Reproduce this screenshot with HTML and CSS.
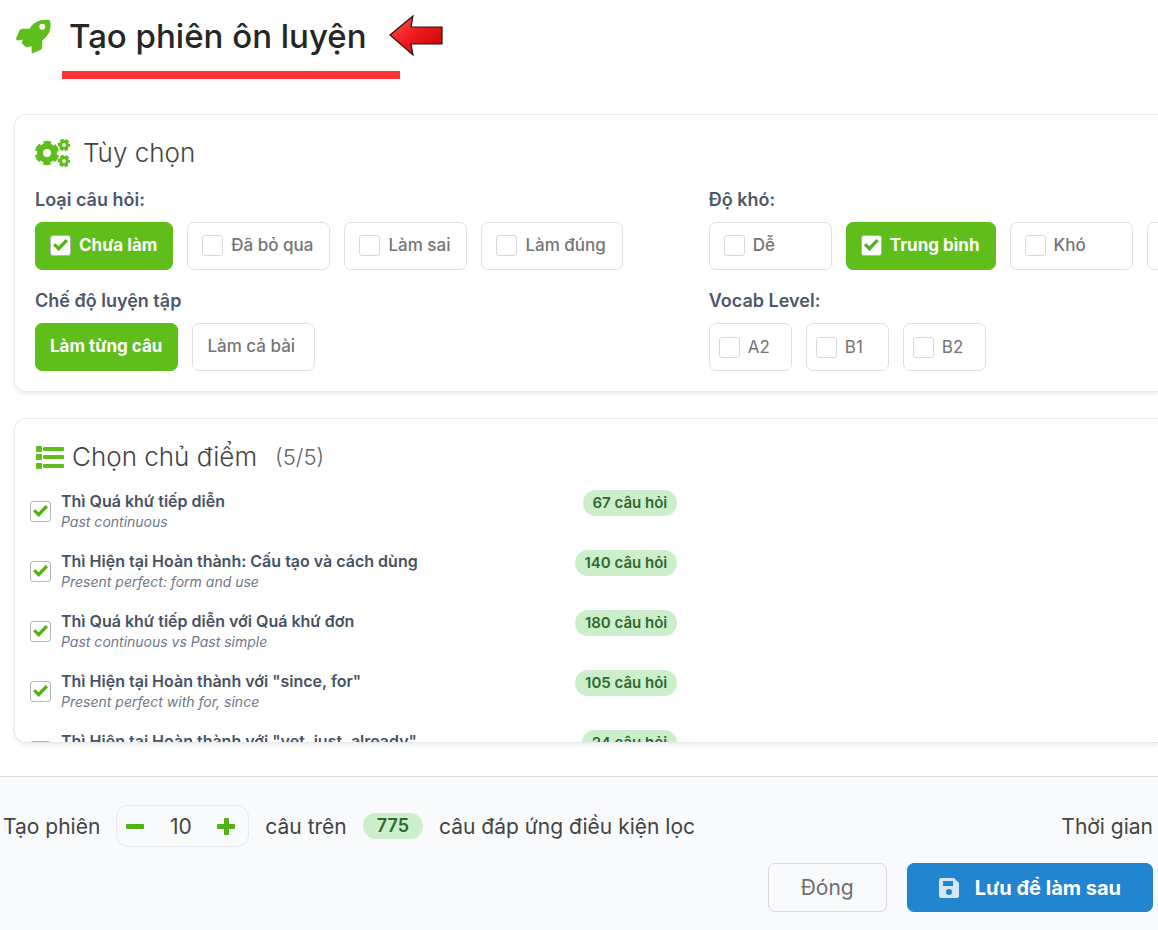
FILE: index.html
```html
<!DOCTYPE html>
<html lang="vi">
<head>
    <meta charset="UTF-8">
    <meta name="viewport" content="width=device-width, initial-scale=1.0">
    <title>Tạo phiên ôn luyện</title>
    <link rel="stylesheet" href="styles.css">
</head>
<body>
    <header class="page-header">
        <svg class="rocket" viewBox="0 0 36 36" aria-hidden="true">
            <path fill-rule="evenodd" d="M34 1C25 0 18 3 14 10H7Q4 10 3 13L0 20Q0 22 2 22L7 21L6 25L10 29L16 28V34Q16 36 18 35L25 32Q27 31 27 28V22C34 17 37 10 35 2Q35 1 34 1ZM27 5A3 3 0 1 1 27 11A3 3 0 1 1 27 5Z"/>
        </svg>
        <h1>Tạo phiên ôn luyện</h1>
        <svg class="arrow" viewBox="0 0 54 42" aria-hidden="true">
            <defs>
                <linearGradient id="red" x1="0" y1="0" x2="1" y2="1">
                    <stop offset="0" stop-color="#ff5a5a"/>
                    <stop offset="0.45" stop-color="#f01c1c"/>
                    <stop offset="1" stop-color="#c00000"/>
                </linearGradient>
            </defs>
            <path d="M1 20L24 1L22 12L53 12V29L22 29L24 40Z" fill="url(#red)" stroke="#2b1010" stroke-width="1.2"/>
        </svg>
    </header>

    <main>
        <!-- Options -->
        <section class="card">
            <h2>
                <svg class="gears" viewBox="0 0 36 28" aria-hidden="true">
                    <g fill="none" stroke="currentColor">
                        <circle cx="12" cy="14" r="7" stroke-width="6"/>
                        <circle cx="12" cy="14" r="10.2" stroke-width="4" stroke-dasharray="7 3.68" stroke-dashoffset="-1.84"/>
                        <circle cx="29" cy="6" r="3.4" stroke-width="3"/>
                        <circle cx="29" cy="6" r="5" stroke-width="2.4" stroke-dasharray="3.2 2.036" stroke-dashoffset="1.6"/>
                        <circle cx="29" cy="22" r="3.4" stroke-width="3"/>
                        <circle cx="29" cy="22" r="5" stroke-width="2.4" stroke-dasharray="3.2 2.036" stroke-dashoffset="1.6"/>
                    </g>
                </svg>
                Tùy chọn
            </h2>
            <div class="options">
                <fieldset>
                    <legend>Loại câu hỏi:</legend>
                    <div class="chips">
                        <label class="chip active"><input type="checkbox" checked>Chưa làm</label>
                        <label class="chip"><input type="checkbox">Đã bỏ qua</label>
                        <label class="chip"><input type="checkbox">Làm sai</label>
                        <label class="chip"><input type="checkbox">Làm đúng</label>
                    </div>
                </fieldset>
                <fieldset>
                    <legend>Độ khó:</legend>
                    <div class="chips">
                        <label class="chip"><input type="checkbox">Dễ</label>
                        <label class="chip active"><input type="checkbox" checked>Trung bình</label>
                        <label class="chip"><input type="checkbox">Khó</label>
                        <label class="chip"><input type="checkbox" aria-label="Khác"></label>
                    </div>
                </fieldset>
                <fieldset>
                    <legend>Chế độ luyện tập</legend>
                    <div class="chips">
                        <button type="button" class="chip active">Làm từng câu</button>
                        <button type="button" class="chip">Làm cả bài</button>
                    </div>
                </fieldset>
                <fieldset>
                    <legend>Vocab Level:</legend>
                    <div class="chips">
                        <label class="chip level"><input type="checkbox">A2</label>
                        <label class="chip level"><input type="checkbox">B1</label>
                        <label class="chip level"><input type="checkbox">B2</label>
                    </div>
                </fieldset>
            </div>
        </section>

        <!-- Topics -->
        <section class="card topics">
            <h2>
                <svg class="list-icon" viewBox="0 0 28 23" aria-hidden="true">
                    <rect x="0" y="0" width="6" height="6" rx="1"/>
                    <rect x="0" y="8" width="6" height="6" rx="1"/>
                    <rect x="0" y="17" width="6" height="6" rx="1"/>
                    <rect x="7" y="1" width="21" height="4" rx="1"/>
                    <rect x="7" y="9" width="21" height="4" rx="1"/>
                    <rect x="7" y="18" width="21" height="4" rx="1"/>
                </svg>
                Chọn chủ điểm <small>(5/5)</small>
            </h2>
            <ul class="topic-list">
                <li>
                    <input type="checkbox" id="topic-1" checked>
                    <label for="topic-1">Thì Quá khứ tiếp diễn<em>Past continuous</em></label>
                    <span class="badge">67 câu hỏi</span>
                </li>
                <li>
                    <input type="checkbox" id="topic-2" checked>
                    <label for="topic-2">Thì Hiện tại Hoàn thành: Cấu tạo và cách dùng<em>Present perfect: form and use</em></label>
                    <span class="badge">140 câu hỏi</span>
                </li>
                <li>
                    <input type="checkbox" id="topic-3" checked>
                    <label for="topic-3">Thì Quá khứ tiếp diễn với Quá khứ đơn<em>Past continuous vs Past simple</em></label>
                    <span class="badge">180 câu hỏi</span>
                </li>
                <li>
                    <input type="checkbox" id="topic-4" checked>
                    <label for="topic-4">Thì Hiện tại Hoàn thành với "since, for"<em>Present perfect with for, since</em></label>
                    <span class="badge">105 câu hỏi</span>
                </li>
                <li>
                    <input type="checkbox" id="topic-5" checked>
                    <label for="topic-5">Thì Hiện tại Hoàn thành với "yet, just, already"</label>
                    <span class="badge">24 câu hỏi</span>
                </li>
            </ul>
        </section>
    </main>

    <footer>
        <div class="summary">
            <label for="count">Tạo phiên</label>
            <div class="stepper">
                <button type="button" aria-label="Giảm">
                    <svg viewBox="0 0 18 18"><rect x="0" y="7" width="18" height="5" rx="1"/></svg>
                </button>
                <input type="text" id="count" value="10">
                <button type="button" aria-label="Tăng">
                    <svg viewBox="0 0 18 18"><rect x="0" y="7" width="18" height="5" rx="1"/><rect x="7" y="1" width="5" height="17" rx="1"/></svg>
                </button>
            </div>
            <span>câu trên</span>
            <span class="badge total">775</span>
            <span>câu đáp ứng điều kiện lọc</span>
            <span class="time">Thời gian</span>
        </div>
        <div class="actions">
            <button type="button" class="btn">Đóng</button>
            <button type="button" class="btn btn-primary">
                <svg viewBox="0 0 20 20" aria-hidden="true"><path fill-rule="evenodd" d="M2 0H15L20 5V18Q20 20 18 20H2Q0 20 0 18V2Q0 0 2 0ZM4 3V8H14V3ZM10 11A3 3 0 1 0 10 17A3 3 0 1 0 10 11Z"/></svg>
                Lưu để làm sau
            </button>
        </div>
    </footer>
</body>
</html>
```
FILE: styles.css
```css
* {
    margin: 0;
    padding: 0;
    box-sizing: border-box;
}

body {
    display: flex;
    flex-direction: column;
    height: 100vh;
    overflow: hidden;
    font-family: Inter, "Noto Sans", sans-serif;
    font-size: 17px;
    color: #444;
    background: #fff;
}

button, input {
    font: inherit;
    color: inherit;
}

/* Header */
.page-header {
    display: flex;
    align-items: center;
    gap: 18px;
    height: 72px;
    padding-left: 16px;
}

.rocket {
    width: 35px;
    height: 35px;
    fill: #5fbe1a;
}

h1 {
    position: relative;
    font-size: 33px;
    line-height: 40px;
    font-weight: 500;
    color: #262626;
}

h1::after {
    content: "";
    position: absolute;
    left: -7px;
    right: -33px;
    top: 55px;
    height: 8px;
    background: #ff3131;
}

.arrow {
    width: 54px;
    height: 42px;
    margin-left: 4px;
}

/* Cards */
main {
    flex: 1;
    min-height: 0;
    display: flex;
    flex-direction: column;
    gap: 26px;
    padding: 42px 0 33px 14px;
}

.card {
    padding: 20px 0 20px 20px;
    border: 1px solid #e6e9ea;
    border-right: none;
    border-radius: 12px 0 0 12px;
    box-shadow: 0 2px 4px rgba(0, 0, 0, 0.08);
}

h2 {
    display: flex;
    align-items: center;
    gap: 12px;
    font-size: 26px;
    line-height: 36px;
    font-weight: 300;
    color: #444;
}

h2 svg {
    color: #5fbe1a;
    fill: #5fbe1a;
}

.gears {
    width: 36px;
    height: 28px;
}

.options {
    display: grid;
    grid-template-columns: 3fr 2fr;
    row-gap: 19px;
    margin-top: 17px;
}

fieldset {
    min-width: 0;
    border: none;
    overflow: hidden;
}

legend {
    margin-bottom: 10px;
    font-size: 18px;
    line-height: 24px;
    font-weight: 600;
    color: #4d586b;
}

.chips {
    display: flex;
    gap: 14px;
}

.chip {
    display: flex;
    flex: none;
    align-items: center;
    gap: 8px;
    min-width: 123px;
    height: 48px;
    padding: 0 16px 2px 14px;
    border: 1px solid #dfdfe2;
    border-radius: 7px;
    background: #fff;
    color: #757575;
    font-weight: 500;
    white-space: nowrap;
}

.chip.active {
    padding-right: 15px;
    border-color: #5fbe1a;
    background: #5fbe1a;
    color: #fff;
    font-weight: 700;
}

.chip.level {
    min-width: 83px;
    padding: 0 9px;
    font-weight: 400;
}

input[type="checkbox"] {
    appearance: none;
    display: grid;
    place-items: center;
    flex: none;
    width: 21px;
    height: 21px;
    border: 1px solid #d5d8dd;
    border-radius: 3px;
    background: #fff;
}

input[type="checkbox"]:checked {
    border-color: #b4b4b8;
}

input[type="checkbox"]:checked::before {
    content: "";
    width: 15px;
    height: 12px;
    background: #54b115;
    clip-path: polygon(0 52%, 16% 36%, 37% 60%, 84% 0, 100% 18%, 38% 100%);
}

/* Topics */
.topics {
    flex: 1;
    min-height: 0;
    padding: 20px 0 0 15px;
    overflow: hidden;
}

.topics h2 {
    gap: 8px;
    padding-left: 6px;
}

.list-icon {
    width: 28px;
    height: 23px;
}

h2 small {
    margin-left: 10px;
    font-size: 22px;
    color: #666;
}

.topic-list {
    width: 58%;
    margin-top: 15px;
    padding-right: 7px;
    list-style: none;
}

.topic-list li {
    display: flex;
    align-items: center;
    gap: 10px;
    min-height: 42px;
    margin-bottom: 18px;
}

.topic-list label {
    flex: 1;
    align-self: flex-start;
    font-size: 16px;
    line-height: 22px;
    font-weight: 600;
    color: #475264;
}

.topic-list em {
    display: block;
    font-size: 14px;
    line-height: 20px;
    font-weight: 400;
    color: #6f7887;
}

.badge {
    align-self: flex-start;
    padding: 0 10px;
    border-radius: 13px;
    background: #cdeecb;
    color: #2d6a32;
    font-size: 15px;
    line-height: 26px;
    font-weight: 600;
}

/* Footer */
footer {
    padding: 28px 5px 18px 3px;
    border-top: 1px solid #d9dce0;
    background: #f9fafc;
    font-size: 21px;
}

.summary {
    display: flex;
    align-items: center;
    gap: 16px;
    height: 42px;
}

.stepper {
    display: flex;
    align-items: center;
    justify-content: space-between;
    width: 133px;
    height: 42px;
    padding: 0 13px 0 9px;
    border: 1px solid #e8e9ec;
    border-radius: 12px;
}

.stepper button {
    display: flex;
    border: none;
    background: none;
}

.stepper svg {
    width: 18px;
    height: 18px;
    fill: #54b115;
}

.stepper input {
    width: 40px;
    border: none;
    background: none;
    text-align: center;
}

.total {
    align-self: center;
    padding: 0 14px;
    font-size: 18px;
}

.time {
    margin-left: auto;
}

.actions {
    display: flex;
    justify-content: flex-end;
    gap: 20px;
    margin-top: 16px;
}

.btn {
    display: flex;
    align-items: center;
    gap: 16px;
    height: 49px;
    padding: 0 32px;
    border: 1px solid #d9d9dc;
    border-radius: 7px;
    background: #f9fafc;
    color: #6e6e6e;
}

.btn-primary {
    padding: 0 31px;
    border-color: #2185d0;
    background: #2185d0;
    color: #fff;
    font-size: 20px;
    font-weight: 700;
}

.btn svg {
    width: 20px;
    height: 20px;
    fill: #d3e7f6;
}
```
